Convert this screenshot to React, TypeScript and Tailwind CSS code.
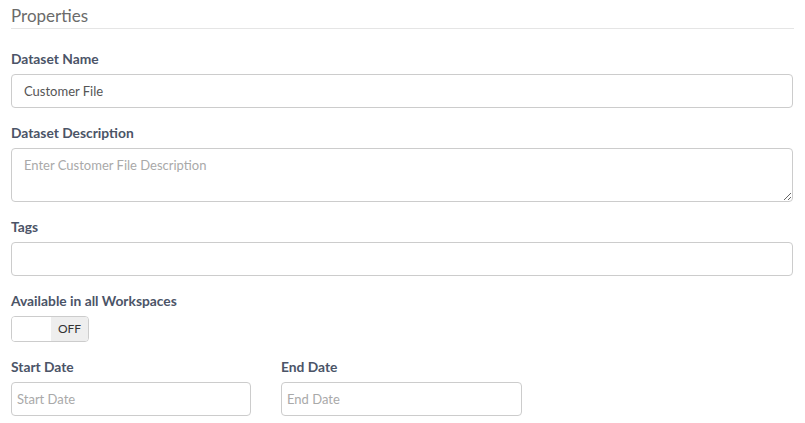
import { useState } from "react";

const labelCls = "block text-[13.8px] font-bold text-[#4b5467] leading-[16px] mb-[7px]";
const inputCls =
  "block w-full h-[34px] border border-[#cccccc] rounded-[4px] bg-white text-[13px] text-[#555555] placeholder:text-[#a9a9a9] focus:outline-none";

export default function App() {
  const [name, setName] = useState("Customer File");
  const [available, setAvailable] = useState(false);

  return (
    <main className="w-[805px] h-[423px] bg-white px-[11px] pt-[5px] font-['Lato',sans-serif]">
      <h2 className="text-[17px] leading-[22px] text-[#6b6b6b] pb-[1px] border-b border-[#e5e5e5]">Properties</h2>

      <div className="w-[782px] mt-[22px]">
        <label className={labelCls}>Dataset Name</label>
        <input
          type="text"
          className={`${inputCls} px-[12px]`}
          value={name}
          onChange={(e) => setName(e.target.value)}
        />

        <label className={`${labelCls} mt-[17px]`}>Dataset Description</label>
        <textarea
          className={`${inputCls} h-[54px] px-[12px] pt-[7px] resize-y`}
          placeholder="Enter Customer File Description"
        />

        <label className={`${labelCls} mt-[17px]`}>Tags</label>
        <input type="text" className={`${inputCls} px-[12px]`} />

        <label className={`${labelCls} mt-[17px]`}>Available in all Workspaces</label>
        <button
          onClick={() => setAvailable(!available)}
          className="flex w-[78px] h-[26px] border border-[#cccccc] rounded-[4px] overflow-hidden bg-white"
        >
          <span className="w-[39px] h-full bg-white" />
          <span className="flex-1 h-full bg-[#eeeeee] flex items-center justify-center text-[12px] text-[#333333]">
            {available ? "ON" : "OFF"}
          </span>
        </button>

        <div className="flex gap-[30px] mt-[17px]">
          <div className="w-[240px]">
            <label className={labelCls}>Start Date</label>
            <input type="text" className={`${inputCls} px-[5px]`} placeholder="Start Date" />
          </div>
          <div className="w-[241px]">
            <label className={labelCls}>End Date</label>
            <input type="text" className={`${inputCls} px-[5px]`} placeholder="End Date" />
          </div>
        </div>
      </div>
    </main>
  );
}
